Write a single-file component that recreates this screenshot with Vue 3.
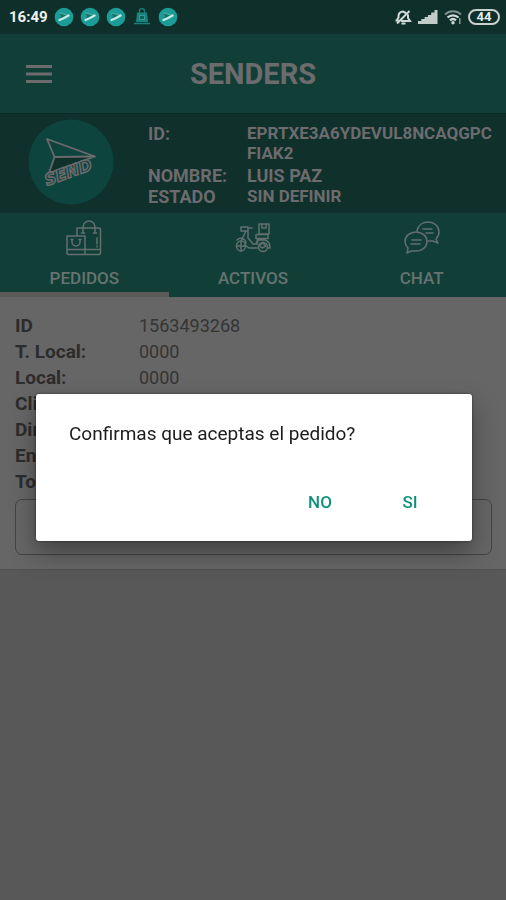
<script setup>
import { ref } from 'vue'

const tabs = ['PEDIDOS', 'ACTIVOS', 'CHAT']
const active = ref('PEDIDOS')
const order = [
  ['ID', '1563493268'],
  ['T. Local:', '0000'],
  ['Local:', '0000'],
  ['Cliente:', ''],
  ['Dir.:', ''],
  ['Entrega:', ''],
  ['Total:', ''],
]
const notices = ['send', 'send', 'send', 'bag', 'send']
</script>

<template>
  <div class="app">
    <div class="status">
      <span class="clock">16:49</span>
      <div class="notices">
        <svg v-for="(n, i) in notices" :key="i" width="20" height="20" viewBox="0 0 20 20">
          <template v-if="n === 'send'">
            <circle cx="10" cy="10" r="9.3" fill="#1b9c96" />
            <path d="M5 5.500 14.500 8.500 6 12 7 9Z" fill="#176f66" />
            <path d="M5 5.800 13 8" stroke="#4fb3ab" stroke-width="1" />
            <path d="M5.500 13 10 11 14.500 8.500" fill="none" stroke="#c4ece7" stroke-width="2.400" stroke-linecap="round" />
          </template>
          <template v-else>
            <path d="M7.500 6V4.200a2.500 2.500 0 0 1 5 0V6" fill="none" stroke="#17837c" stroke-width="1.300" />
            <path d="M5 5.500h10l1 9.500h-12Z" fill="#17837c" />
            <path d="M2 16.500h16" stroke="#17837c" stroke-width="1.500" />
            <path d="M7.500 8.500h5v4h-5Z" fill="#126059" stroke="#3fa59d" stroke-width=".800" />
          </template>
        </svg>
      </div>
      <div class="system">
        <svg width="18" height="18" viewBox="0 0 18 18" fill="none" stroke="#d2dad8" stroke-width="2">
          <path d="M3 12 4.500 9.500V8A4.500 4.500 0 0 1 9 3.500L12 5M14 6.500V10l2 3H7M1.500 12.500h3M7.500 15.500h4M15.500 3 3 15.500" />
        </svg>
        <svg width="20" height="16" viewBox="0 0 20 16" fill="#c3cbc9">
          <path d="M0 12h3.400v3H0ZM3.300 10h3.400v5h-3.400ZM6.600 8h3.400v7h-3.400ZM9.900 6h3.400v9h-3.400ZM13.200 3.500h3.400V15h-3.400ZM16.500 1h3v14h-3Z" />
        </svg>
        <svg width="18" height="16" viewBox="0 0 18 16" fill="none">
          <path d="M1 5.500a11.500 11.500 0 0 1 16 0" stroke="#7d918d" stroke-width="1.800" />
          <path d="M3.500 8.500a8 8 0 0 1 11 0M6 11.300a4.500 4.500 0 0 1 6 0" stroke="#d2dad8" stroke-width="2.300" />
          <circle cx="9" cy="13.800" r="1.700" fill="#d2dad8" />
          <path d="M15.800 9v6" stroke="#8fa09c" stroke-width="1.400" />
        </svg>
        <span class="battery">44</span>
      </div>
    </div>

    <header class="bar">
      <button class="menu" aria-label="Menú">
        <svg width="26" height="20" viewBox="0 0 26 20" stroke="#6c6b6e" stroke-width="3">
          <path d="M0 2.500h26M0 10h26M0 17.500h26" />
        </svg>
      </button>
      <h1>SENDERS</h1>
    </header>

    <section class="profile">
      <svg class="logo" width="86" height="86" viewBox="0 0 86 86">
        <circle cx="43" cy="43" r="42.500" fill="#0e443e" />
        <path d="M26.500 38H62L21 54Z" fill="#0f302b" />
        <path d="M19 20 67 37.500 26.500 38ZM26.500 38 21 54 67 37.500" fill="none" stroke="#6b6a6d" stroke-width="1.800" stroke-linejoin="round" />
        <text class="brand" transform="translate(19 67) rotate(-20)">SEND</text>
      </svg>
      <dl class="info">
        <dt>ID:</dt><dd class="small">EPRTXE3A6YDEVUL8NCAQGPCFIAK2</dd>
        <dt>NOMBRE:</dt><dd>LUIS PAZ</dd>
        <dt>ESTADO</dt><dd class="small state">SIN DEFINIR</dd>
      </dl>
    </section>

    <nav class="tabs">
      <button v-for="t in tabs" :key="t" :class="{ on: t === active }" @click="active = t">
        <svg width="36" height="36" viewBox="0 0 36 36" fill="none" stroke="#61706d" stroke-width="1.500" stroke-linejoin="round" stroke-linecap="round">
          <template v-if="t === 'PEDIDOS'">
            <path d="M11 15V8h22a1.500 1.500 0 0 1 1.500 1.500V33a1.500 1.500 0 0 1-1.500 1.500H2.500A1.500 1.500 0 0 1 1 33V16h18v18.500M1 29.500h33.500M17 13V7a6 6 0 0 1 12 0v6M15.500 13h3M27.500 13h3M31 18v6M31 26v1" />
            <path d="M6 19.500V22a4 4 0 0 0 8 0v-2.500M5 19.500h2M13 19.500h2" />
          </template>
          <template v-else-if="t === 'ACTIVOS'">
            <ellipse cx="6" cy="26" rx="4.500" ry="5" />
            <circle cx="28" cy="27" r="4.500" />
            <path d="M6 7h7v4H6ZM13 8h4M11 11 6 21v10M1.500 26h9M13 11v7l5 6h4l1-4M10 25l4 3h9.500M2 20c3-3 8-2 9 3M24 4h10v10H24ZM27 4v4h4V4M21 14.500h12v4H21ZM23 18.500 21 24M23 20h7c3 1 5 4 5 8h-2.500M24 25l4-2 3 3-4 2Z" />
          </template>
          <template v-else>
            <path d="M13 11C14 5 19 2 24.500 2S35 6 35 12c0 3-1 5-3 7l2 4-5-2h-5" />
            <path d="M12 12c6 0 11 4 11 9.500S18 31 12 31H7l-4 2 1-5c-2-2-3-4-3-6.500C1 16 6 12 12 12ZM8 20h9M7 24h9M19 9h9M22 13h7" />
          </template>
        </svg>
        <span>{{ t }}</span>
      </button>
    </nav>

    <main class="card">
      <table>
        <tbody>
          <tr v-for="[k, v] in order" :key="k"><th scope="row">{{ k }}</th><td>{{ v }}</td></tr>
        </tbody>
      </table>
      <button class="accept" aria-label="Aceptar pedido"></button>
    </main>

    <div class="overlay">
      <div class="dialog" role="dialog" aria-modal="true" aria-labelledby="ask">
        <p id="ask">Confirmas que aceptas el pedido?</p>
        <div class="actions">
          <button>NO</button>
          <button>SI</button>
        </div>
      </div>
    </div>
  </div>
</template>

<style>
body { background: #585858; }
</style>

<style scoped>
.app { min-height: 100vh; font-family: Roboto, "Liberation Sans", sans-serif; color: #6e6e70; background: #585858; }
button { border: 0; padding: 0; background: none; font: inherit; color: inherit; cursor: pointer; }
svg { display: block; }
.status { display: flex; align-items: center; height: 34px; padding: 0 6px 0 9px; background: #0f2f2a; }
.clock { color: #eef3f2; font-size: 15px; font-weight: 700; line-height: 18px; }
.notices { display: flex; gap: 6px; margin-left: 6px; }
.system { display: flex; align-items: center; gap: 6px; margin-left: auto; }
.battery { box-sizing: border-box; width: 32px; height: 16px; border: 2px solid #c9d1cf; border-radius: 8px; color: #e6ecea; font-size: 13px; font-weight: 700; line-height: 12px; text-align: center; }
.bar { display: grid; grid-template-columns: 26px 1fr 26px; align-items: center; height: 79px; padding: 0 26px; background: #113f38; }
.bar h1 { margin: 0; font-size: 29px; font-weight: 700; text-align: center; line-height: 36px; color: #6c6b6e; }
.profile { display: flex; align-items: flex-start; gap: 34px; padding: 5px 14px 6px 28px; background: #0f302b; border-top: 1px solid #0b2823; }
.logo { flex: none; }
.brand { font-family: "DejaVu Sans", sans-serif; font-size: 16px; font-weight: 700; font-style: italic; fill: #0e443e; stroke: #6b6a6d; stroke-width: 1.5px; }
.info { display: grid; grid-template-columns: 99px 1fr; flex: 1; min-width: 0; margin: 4px 0 0; font-size: 18px; font-weight: 700; line-height: 21px; color: #6c6b6e; }
.info dt, .info dd { margin: 0; }
.info .small { padding-bottom: 2px; font-size: 17px; line-height: 20px; word-break: break-all; }
.info .state { padding: 0; line-height: 21px; }
.tabs { display: grid; grid-template-columns: repeat(3, 1fr); height: 84px; background: #113f38; }
.tabs button { display: flex; flex-direction: column; align-items: center; gap: 10px; padding-top: 7px; border-bottom: 5px solid transparent; font-size: 17px; font-weight: 500; line-height: 24px; color: #667370; }
.tabs button.on { border-color: #5d5a5c; }
.card { padding: 16px 14px 14px 15px; background: #666; border-bottom: 1px solid #505050; }
table { width: 100%; border-collapse: collapse; table-layout: fixed; }
th, td { height: 26px; padding: 0; font-size: 18px; line-height: 26px; text-align: left; }
th { width: 124px; font-size: 19px; font-weight: 700; color: #2c2c2c; }
td { font-weight: 400; color: #353535; }
.accept { display: block; box-sizing: border-box; width: 100%; height: 56px; margin-top: 4px; border: 1px solid #444; border-radius: 7px; }
.overlay { position: fixed; inset: 34px 0 0; display: flex; align-items: center; justify-content: center; padding: 0 34px 0 36px; }
.dialog { box-sizing: border-box; flex: 1; padding: 26px 22px 17px 33px; border-radius: 3px; background: #fff; box-shadow: 0 12px 26px rgba(0, 0, 0, .35), 0 0 3px rgba(0, 0, 0, .5); }
.dialog p { margin: 0; font-size: 19px; line-height: 28px; color: #1c1c1c; }
.actions { display: flex; justify-content: flex-end; gap: 10px; margin-top: 32px; }
.actions button { width: 80px; height: 44px; font-size: 17px; font-weight: 500; color: #13917f; }
</style>
